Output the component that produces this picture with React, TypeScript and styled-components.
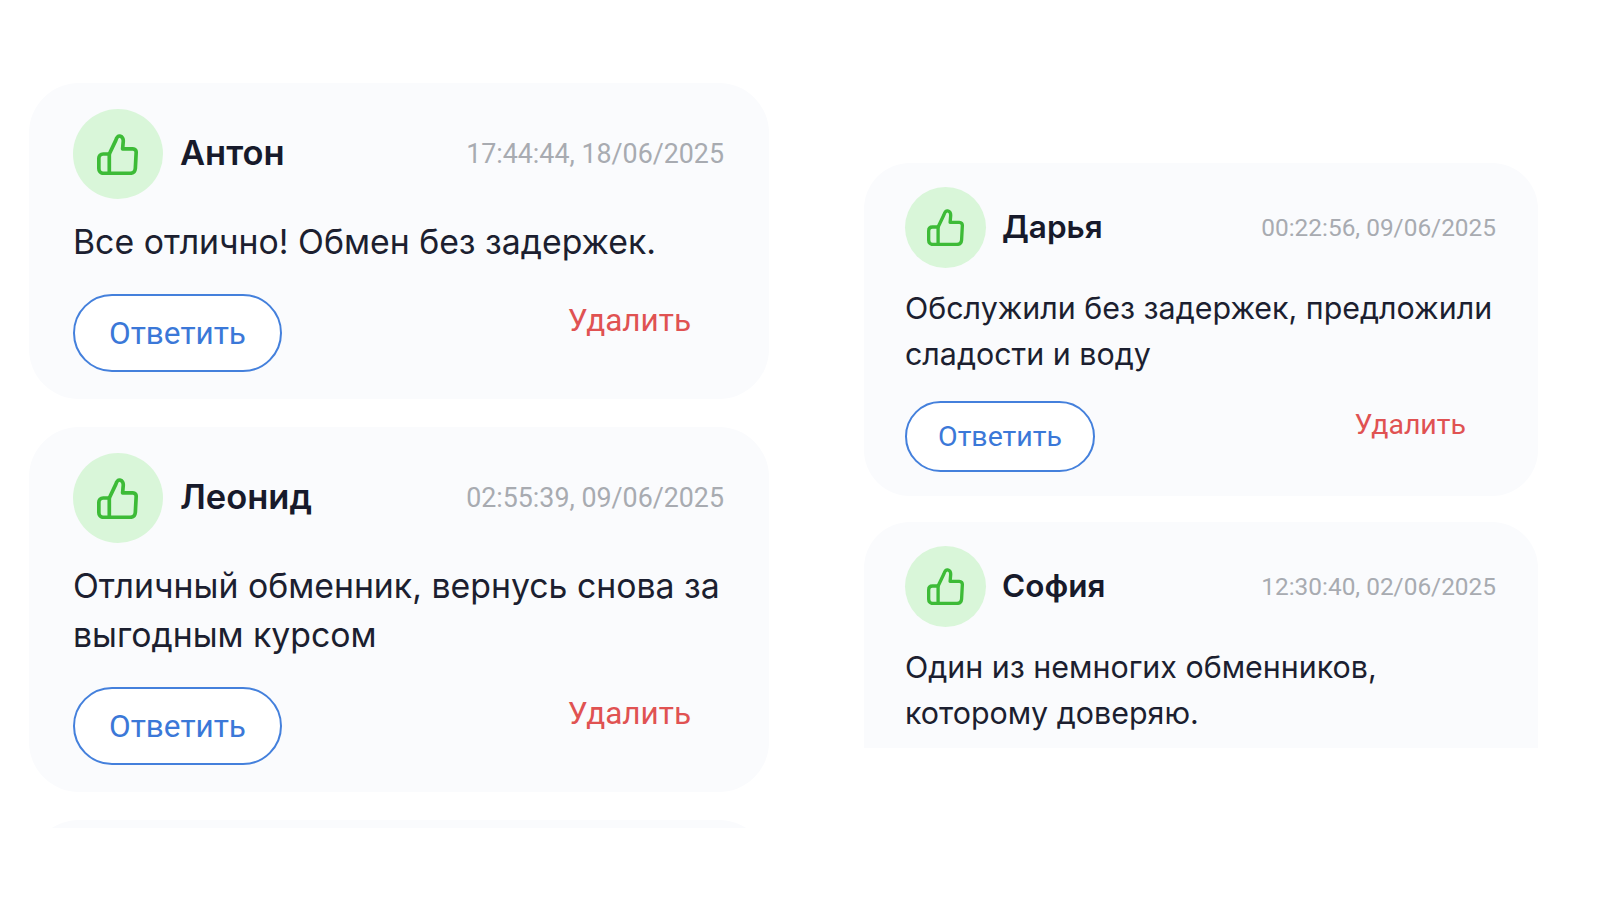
import React from 'react';
import styled, { createGlobalStyle } from 'styled-components';

type Size = 'lg' | 'md';

const sizes = {
  lg: {
    padTop: 26, padBottom: 27, padLeft: 44, padRight: 45, radius: 50, avatar: 90, icon: 41, gap: 18,
    name: 34.5, nameLeft: 17, time: 26.8, text: 33.8, line: 49, actions: 28, btnW: 209, btnH: 78,
    btnFont: 31.5, delFont: 31.5, delRight: 33, delTop: 6, delLine: 42,
  },
  md: {
    padTop: 24, padBottom: 24, padLeft: 41, padRight: 42, radius: 46, avatar: 81, icon: 37, gap: 17,
    name: 31.5, nameLeft: 16, time: 24.4, text: 30.4, line: 46, actions: 24, btnW: 190, btnH: 71,
    btnFont: 28.5, delFont: 28.5, delRight: 30, delTop: 5, delLine: 38,
  },
};

type Review = { name: string; time: string; text: string; cut?: boolean };

const leftReviews: Review[] = [
  { name: 'Антон', time: '17:44:44, 18/06/2025', text: 'Все отлично! Обмен без задержек.' },
  { name: 'Леонид', time: '02:55:39, 09/06/2025', text: 'Отличный обменник, вернусь снова за выгодным курсом' },
];

const rightReviews: Review[] = [
  { name: 'Дарья', time: '00:22:56, 09/06/2025', text: 'Обслужили без задержек, предложили сладости и воду' },
  { name: 'София', time: '12:30:40, 02/06/2025', text: 'Один из немногих обменников, которому доверяю.', cut: true },
];

const ThumbIcon: React.FC<{ size: number }> = ({ size }) => (
  <svg width={size} height={size} viewBox="0 0 40 40" fill="none" stroke="#3dbb37" strokeWidth="3.6" strokeLinejoin="round" strokeLinecap="round">
    <path d="M12 19.5 18.2 6.5C19.2 3.2 20.8 1.8 22.4 2c2.2.3 3.4 2.6 3.2 5.2L25 14.5h10c2.2 0 3.4 1.6 3.2 3.8l-.8 15.2c-.3 3-2.2 4.8-5 4.8H12" />
    <path d="M12 19.5H6c-2.6 0-4.2 1.7-4.2 4.2v10c0 2.6 1.6 4.6 4.2 4.6h6V19.5Z" />
  </svg>
);

const ReviewCard: React.FC<{ review: Review; size: Size }> = ({ review, size }) => (
  <Card $size={size} $cut={review.cut}>
    <Header>
      <Avatar $size={size}>
        <ThumbIcon size={sizes[size].icon} />
      </Avatar>
      <Name $size={size}>{review.name}</Name>
      <Time $size={size}>{review.time}</Time>
    </Header>
    <Message $size={size}>{review.text}</Message>
    {!review.cut && (
      <Actions $size={size}>
        <ReplyButton $size={size}>Ответить</ReplyButton>
        <DeleteButton $size={size}>Удалить</DeleteButton>
      </Actions>
    )}
  </Card>
);

const App: React.FC = () => {
  return (
    <Page>
      <GlobalStyle />
      <LeftColumn>
        {leftReviews.map((r) => (
          <ReviewCard key={r.name} review={r} size="lg" />
        ))}
        <PeekCard />
      </LeftColumn>
      <RightColumn>
        {rightReviews.map((r) => (
          <ReviewCard key={r.name} review={r} size="md" />
        ))}
      </RightColumn>
    </Page>
  );
};

export default App;

const GlobalStyle = createGlobalStyle`
  html, body {
    margin: 0;
    padding: 0;
    background: #fff;
  }
  * {
    box-sizing: border-box;
  }
`;

const Page = styled.div`
  width: 1600px;
  height: 900px;
  overflow: hidden;
  display: flex;
  align-items: flex-start;
  gap: 95px;
  padding-left: 29px;
  background: #fff;
  font-family: Inter, Roboto, sans-serif;
  color: #1a1d2e;
`;

const LeftColumn = styled.div`
  width: 740px;
  height: 745px;
  margin-top: 83px;
  overflow: hidden;
  display: flex;
  flex-direction: column;
  gap: 28px;
`;

const RightColumn = styled.div`
  width: 674px;
  height: 585px;
  margin-top: 163px;
  overflow: hidden;
  display: flex;
  flex-direction: column;
  gap: 26px;
`;

const Card = styled.div<{ $size: Size; $cut?: boolean }>`
  flex-shrink: 0;
  background: #fafbfd;
  border-radius: ${(p) => sizes[p.$size].radius}px;
  padding: ${(p) => sizes[p.$size].padTop}px ${(p) => sizes[p.$size].padRight}px
    ${(p) => (p.$cut ? 120 : sizes[p.$size].padBottom)}px ${(p) => sizes[p.$size].padLeft}px;
`;

const PeekCard = styled.div`
  flex-shrink: 0;
  height: 120px;
  background: #fafbfd;
  border-radius: 50px;
`;

const Header = styled.div`
  display: flex;
  align-items: center;
`;

const Avatar = styled.div<{ $size: Size }>`
  width: ${(p) => sizes[p.$size].avatar}px;
  height: ${(p) => sizes[p.$size].avatar}px;
  border-radius: 50%;
  background: #d9f6d9;
  padding-right: 1px;
  display: flex;
  align-items: center;
  justify-content: center;
  flex-shrink: 0;
`;

const Name = styled.div<{ $size: Size }>`
  margin-left: ${(p) => sizes[p.$size].nameLeft}px;
  padding-bottom: 3px;
  font-size: ${(p) => sizes[p.$size].name}px;
  font-weight: 600;
  color: #171a2b;
`;

const Time = styled.div<{ $size: Size }>`
  margin-left: auto;
  padding-bottom: 1px;
  font-family: Roboto, sans-serif;
  font-size: ${(p) => sizes[p.$size].time}px;
  color: #a8abb1;
`;

const Message = styled.div<{ $size: Size }>`
  margin-top: ${(p) => sizes[p.$size].gap}px;
  font-size: ${(p) => sizes[p.$size].text}px;
  line-height: ${(p) => sizes[p.$size].line}px;
  color: #1c1f30;
`;

const Actions = styled.div<{ $size: Size }>`
  margin-top: ${(p) => sizes[p.$size].actions}px;
  display: flex;
  align-items: flex-start;
  justify-content: space-between;
`;

const ReplyButton = styled.button<{ $size: Size }>`
  width: ${(p) => sizes[p.$size].btnW}px;
  height: ${(p) => sizes[p.$size].btnH}px;
  border: 2.5px solid #4480dc;
  border-radius: 40px;
  background: #fff;
  color: #3b78d8;
  font-family: Roboto, sans-serif;
  font-size: ${(p) => sizes[p.$size].btnFont}px;
  padding: 0;
`;

const DeleteButton = styled.button<{ $size: Size }>`
  border: none;
  background: none;
  padding: 0;
  margin-top: ${(p) => sizes[p.$size].delTop}px;
  margin-right: ${(p) => sizes[p.$size].delRight}px;
  line-height: ${(p) => sizes[p.$size].delLine}px;
  color: #e05252;
  font-family: Roboto, sans-serif;
  font-size: ${(p) => sizes[p.$size].delFont}px;
`;
